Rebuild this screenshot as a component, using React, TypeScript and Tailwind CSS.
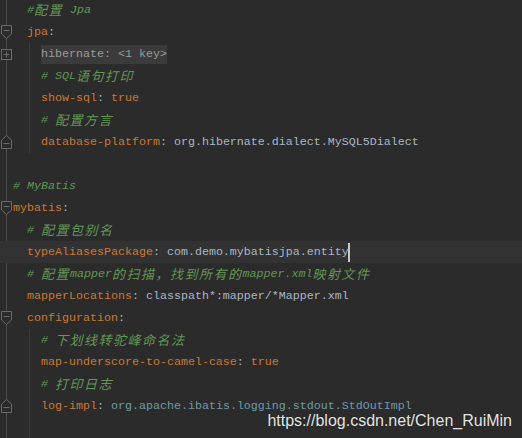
import React from "react";

type Seg = { t: string; c: string; cjk?: boolean };
type Row = {
  indent: number;
  segs: Seg[];
  fold?: "start" | "end" | "plus";
  guide?: boolean;
  hl?: boolean;
  folded?: boolean;
  caret?: boolean;
  italic?: boolean;
};

const K = "#cc7832";
const V = "#a9b7c6";
const C = "#629755";
const T = "#6d9ba8";

const cm = (parts: (string | [string])[]): Seg[] =>
  parts.map((p) => (Array.isArray(p) ? { t: p[0], c: C, cjk: true } : { t: p, c: C }));

const rows: Row[] = [
  { indent: 2, segs: cm(["#", ["配置"], " Jpa"]), italic: true },
  { indent: 2, segs: [{ t: "jpa", c: K }, { t: ":", c: V }], fold: "start" },
  { indent: 4, segs: [{ t: "hibernate: <1 key>", c: "#9a9a9a" }], fold: "plus", guide: true, folded: true },
  { indent: 4, segs: cm(["# SQL", ["语句打印"]]), guide: true, italic: true },
  { indent: 4, segs: [{ t: "show-sql", c: K }, { t: ": ", c: V }, { t: "true", c: K }], guide: true },
  { indent: 4, segs: cm(["# ", ["配置方言"]]), guide: true, italic: true },
  {
    indent: 4,
    segs: [
      { t: "database-platform", c: K },
      { t: ": org.hibernate.dialect.MySQL5Dialect", c: V },
    ],
    fold: "end",
    guide: true,
  },
  { indent: 0, segs: [] },
  { indent: 0, segs: cm(["# MyBatis"]), italic: true },
  { indent: 0, segs: [{ t: "mybatis", c: K }, { t: ":", c: V }], fold: "start" },
  { indent: 2, segs: cm(["# ", ["配置包别名"]]), italic: true },
  {
    indent: 2,
    segs: [{ t: "typeAliasesPackage", c: K }, { t: ": com.demo.mybatisjpa.entity", c: V }],
    hl: true,
    caret: true,
  },
  {
    indent: 2,
    segs: cm(["# ", ["配置"], "mapper", ["的扫描，找到所有的"], "mapper.xml", ["映射文件"]]),
    italic: true,
  },
  { indent: 2, segs: [{ t: "mapperLocations", c: K }, { t: ": classpath*:mapper/*Mapper.xml", c: V }] },
  { indent: 2, segs: [{ t: "configuration", c: K }, { t: ":", c: V }], fold: "start" },
  { indent: 4, segs: cm(["# ", ["下划线转驼峰命名法"]]), guide: true, italic: true },
  { indent: 4, segs: [{ t: "map-underscore-to-camel-case", c: K }, { t: ": ", c: V }, { t: "true", c: K }], guide: true },
  { indent: 4, segs: cm(["# ", ["打印日志"]]), guide: true, italic: true },
  {
    indent: 4,
    segs: [{ t: "log-impl", c: K }, { t: ": ", c: V }, { t: "org.apache.ibatis.logging.stdout.StdOutImpl", c: T }],
    fold: "end",
    guide: true,
  },
  { indent: 4, segs: [], guide: true },
];

function FoldIcon({ kind }: { kind: "start" | "end" | "plus" }) {
  const stroke = "#6b6b6b";
  if (kind === "plus") {
    return (
      <svg width="11" height="11" viewBox="0 0 11 11" className="block">
        <rect x="0.5" y="0.5" width="10" height="10" fill="#2b2b2b" stroke={stroke} />
        <line x1="2.5" y1="5.5" x2="8.5" y2="5.5" stroke={stroke} />
        <line x1="5.5" y1="2.5" x2="5.5" y2="8.5" stroke={stroke} />
      </svg>
    );
  }
  if (kind === "start") {
    return (
      <svg width="11" height="14" viewBox="0 0 11 14" className="block">
        <path d="M0.5 0.5 H10.5 V9 L5.5 13.5 L0.5 9 Z" fill="#2b2b2b" stroke={stroke} />
        <line x1="2.5" y1="5.5" x2="8.5" y2="5.5" stroke={stroke} />
      </svg>
    );
  }
  return (
    <svg width="11" height="14" viewBox="0 0 11 14" className="block">
      <path d="M0.5 13.5 H10.5 V5 L5.5 0.5 L0.5 5 Z" fill="#2b2b2b" stroke={stroke} />
      <line x1="2.5" y1="8.5" x2="8.5" y2="8.5" stroke={stroke} />
    </svg>
  );
}

function Text({ s, italic }: { s: Seg; italic?: boolean }) {
  if (s.cjk) {
    return (
      <span
        className={`text-[13px] tracking-[1.5px] ${italic ? "italic" : ""}`}
        style={{ color: s.c, fontFamily: '"Noto Sans CJK SC", sans-serif' }}
      >
        {s.t}
      </span>
    );
  }
  return (
    <span className={italic ? "italic" : ""} style={{ color: s.c }}>
      {s.t}
    </span>
  );
}

export default function App() {
  return (
    <div
      className="relative w-[522px] h-[438px] overflow-hidden bg-[#2b2b2b] text-[11.67px] leading-[22px]"
      style={{ fontFamily: '"Liberation Mono", "Noto Sans CJK SC", monospace' }}
    >
      <div className="absolute left-[6px] top-0 bottom-0 w-px bg-[#4b4b4b]" />
      <div className="-mt-[1px] flex flex-col">
        {rows.map((r, i) => (
          <div key={i} className={`relative flex h-[22px] items-center ${r.hl ? "bg-[#323232]" : ""}`}>
            <div className="relative z-10 flex w-[13px] shrink-0 items-center justify-start pl-[1px]">
              {r.fold && <FoldIcon kind={r.fold} />}
            </div>
            {r.guide && <div className="absolute left-[29px] top-0 h-[22px] w-px bg-[#3d3d3d]" />}
            <div className="flex h-[22px] items-center whitespace-pre" style={{ paddingLeft: r.indent * 7 }}>
              {r.folded ? (
                <span className="bg-[#3b3b3b] leading-[19px]">
                  {r.segs.map((s, j) => (
                    <Text key={j} s={s} italic={r.italic} />
                  ))}
                </span>
              ) : (
                r.segs.map((s, j) => <Text key={j} s={s} italic={r.italic} />)
              )}
              {r.caret && <span className="ml-[-1px] inline-block h-[19px] w-[2px] bg-[#c8c8c8]" />}
            </div>
          </div>
        ))}
      </div>
      <div
        className="absolute right-[10px] bottom-[7px] text-[16px] leading-[20px] text-[#e6e6e6]"
        style={{ fontFamily: '"Liberation Sans", Arial, sans-serif', textShadow: "0 0 1px rgba(0,0,0,0.6)" }}
      >
        https://blog.csdn.net/Chen_RuiMin
      </div>
    </div>
  );
}
